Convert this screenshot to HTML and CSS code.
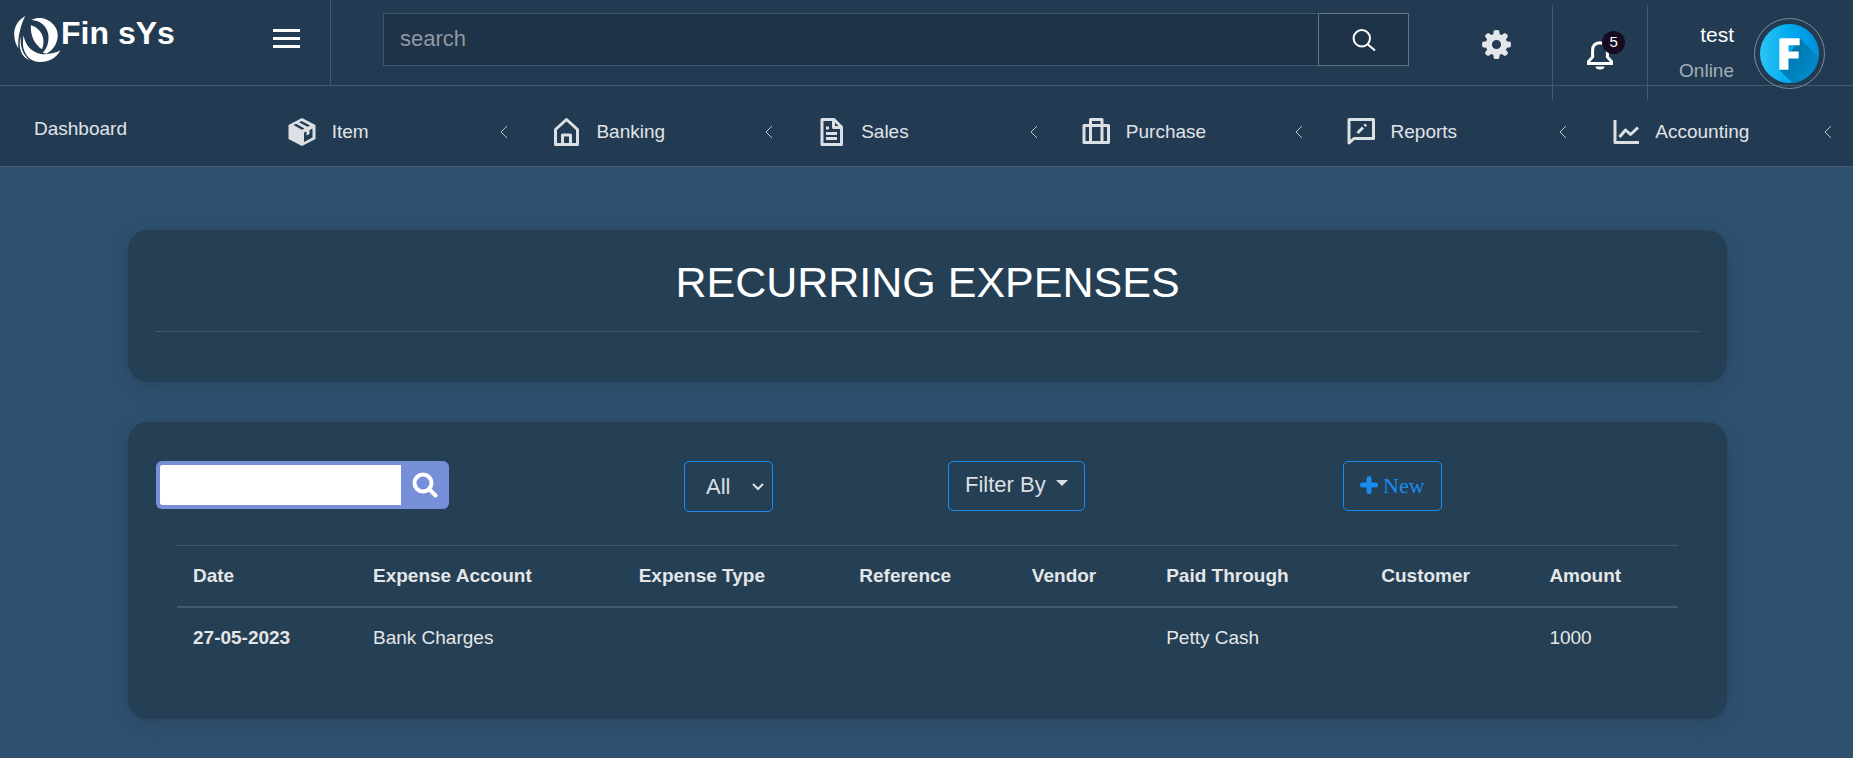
FILE: index.html
```html
<!DOCTYPE html>
<html lang="en">
<head>
<meta charset="utf-8">
<meta name="viewport" content="width=device-width, initial-scale=1">
<title>Fin sYs - Recurring Expenses</title>
<link rel="stylesheet" href="styles.css">
</head>
<body>
<header class="topbar">
  <div class="brand-area">
    <a class="brand" href="#">
      <svg class="brand-logo" viewBox="0 0 48 48" aria-hidden="true">
        <path d="M18 4C23 1.500 29 1.500 34 4C42 8 45.500 15 44.500 22C43.500 29 40 35 33 38.500L29.500 37.500C34 33 36 26 35 18.500C33.500 10 27 4.500 18 4Z"/>
        <path d="M17.300 9.500C23 11 29.500 17 30 24C30.300 28 30 31 28.500 34C21 29 16.500 20 17.300 9.500Z"/>
        <path d="M11.500 0C3 5 -1 13 .5 22C1 27 2.500 30 4.500 33C4 27 4.500 21 6 15.500C7 10 9 5 11.500 0Z"/>
        <path d="M9.800 20C11.500 30 18 37.500 28 38.800C35 39.500 42 38 47.500 35C43.500 42.500 36 47 26.500 47C17 47 10 39 9.200 30C9 26 9.200 23 9.800 20Z"/>
        <path d="M7 20C5.800 31 9 40 16 45C8 42.500 3.500 33 7 20Z"/>
      </svg>
      <span>Fin sYs</span>
    </a>
    <button class="menu-toggle" type="button" aria-label="Toggle menu"><span></span><span></span><span></span></button>
  </div>
  <form class="site-search">
    <input class="site-search-input" type="search" placeholder="search" aria-label="Search">
    <button class="site-search-button" type="button" aria-label="Search">
      <svg viewBox="0 0 24 24" aria-hidden="true"><circle cx="9.8" cy="10.3" r="8.2"/><path d="M15.600 16.200L23 22.500"/></svg>
    </button>
  </form>
  <div class="top-menu">
    <button class="settings" type="button" aria-label="Settings">
      <svg viewBox="0 0 24 24" aria-hidden="true"><path fill-rule="evenodd" d="M9.800 0.500Q12-.4 14.200.5L14.700 3.500 16.300 4.200 18.800 2.400Q21 3 21.600 5.200L19.800 7.700 20.500 9.300 23.500 9.800Q24.400 12 23.500 14.200L20.500 14.700 19.800 16.300 21.600 18.800Q21 21 18.800 21.600L16.300 19.800 14.700 20.500 14.200 23.500Q12 24.400 9.800 23.500L9.300 20.500 7.700 19.800 5.200 21.600Q3 21 2.400 18.800L4.200 16.300 3.500 14.700 .5 14.200Q-.4 12 .5 9.800L3.500 9.300 4.200 7.700 2.400 5.200Q3 3 5.200 2.400L7.700 4.200 9.300 3.500ZM12 8.200a3.800 3.800 0 1 0 0 7.600 3.800 3.800 0 0 0 0-7.600z"/></svg>
    </button>
    <button class="notifications" type="button" aria-label="5 notifications">
      <svg viewBox="0 0 28 30" aria-hidden="true"><path d="M14 2.800C9 3 6.600 6 6.600 10.500V17L2.500 21.500V23.500H25.500V21.500L21.400 17V10.500C21.400 6 19 3 14 2.800Z" class="bell-line"/><path d="M9.500 26.500h9a4.500 3 0 0 1-9 0z"/></svg>
      <span class="badge">5</span>
    </button>
    <a class="user" href="#">
      <span class="user-text"><span class="user-name">test</span><span class="user-status">Online</span></span>
      <span class="avatar">
        <svg viewBox="0 0 58 58" aria-hidden="true">
          <defs>
            <linearGradient id="disc"><stop offset="0" stop-color="#2cc4f6"/><stop offset=".5" stop-color="#00aaee"/><stop offset="1" stop-color="#0090dc"/></linearGradient>
            <linearGradient id="shade" x1="0" y1="0" x2="1" y2="1"><stop offset="0" stop-color="#006c9c"/><stop offset="1" stop-color="#0098e0"/></linearGradient>
            <clipPath id="round"><circle cx="29" cy="29" r="29"/></clipPath>
          </defs>
          <g clip-path="url(#round)">
            <rect width="58" height="58" fill="url(#disc)"/>
            <path d="M39 14L64 39V66H40L19 45Z" fill="url(#shade)"/>
            <path d="M20 14H39V21H28V27H38V34H28V45H19V15Z" fill="#fff"/>
          </g>
        </svg>
      </span>
    </a>
  </div>
</header>

<nav class="main-nav" aria-label="Main">
  <a class="nav-link nav-home" href="#">Dashboard</a>
  <a class="nav-link" href="#">
    <svg class="nav-icon" viewBox="0 0 32 32" aria-hidden="true"><path fill-rule="evenodd" d="M16 2L29.500 9V23L16 30L2.500 23V9ZM18 16.500V26L26.500 21.500V12.500L23.500 14V18L20.500 19.500V15.500ZM7.500 9L10 7.800L18.500 12.500L16 13.700ZM13 6.300L15.500 5L24 9.500L21.500 10.800Z"/></svg>
    <span>Item</span><svg class="chevron" viewBox="0 0 8 14" aria-hidden="true"><path d="M7 1L1 7L7 13"/></svg>
  </a>
  <a class="nav-link" href="#">
    <svg class="nav-icon lined" viewBox="0 0 32 32" aria-hidden="true"><path d="M16.500 3.500L27.500 13.500V28.500H5.500V13.500Z"/><path d="M12.500 28V19H20.500V28"/></svg>
    <span>Banking</span><svg class="chevron" viewBox="0 0 8 14" aria-hidden="true"><path d="M7 1L1 7L7 13"/></svg>
  </a>
  <a class="nav-link" href="#">
    <svg class="nav-icon lined" viewBox="0 0 32 32" aria-hidden="true"><path d="M7 3.500H19L26.500 11V28.500H7Z"/><path d="M18.500 4V11.500H26M11 17.500H22M11 22.500H22M11 12H14"/></svg>
    <span>Sales</span><svg class="chevron" viewBox="0 0 8 14" aria-hidden="true"><path d="M7 1L1 7L7 13"/></svg>
  </a>
  <a class="nav-link" href="#">
    <svg class="nav-icon lined" viewBox="0 0 32 32" aria-hidden="true"><path d="M4 9.500H28.500V26.500H4ZM10.500 26V3.500H22V26"/></svg>
    <span>Purchase</span><svg class="chevron" viewBox="0 0 8 14" aria-hidden="true"><path d="M7 1L1 7L7 13"/></svg>
  </a>
  <a class="nav-link" href="#">
    <svg class="nav-icon lined" viewBox="0 0 32 32" aria-hidden="true"><path d="M4 3.500H28.500V22.500H9L4 27Z"/><path d="M12.500 17L18 11.500M19.500 10L21 8.500"/></svg>
    <span>Reports</span><svg class="chevron" viewBox="0 0 8 14" aria-hidden="true"><path d="M7 1L1 7L7 13"/></svg>
  </a>
  <a class="nav-link" href="#">
    <svg class="nav-icon lined" viewBox="0 0 32 32" aria-hidden="true"><path d="M6 4V26.500H30M10.500 21L16.500 14L21.500 18.500L29 11.500"/></svg>
    <span>Accounting</span><svg class="chevron" viewBox="0 0 8 14" aria-hidden="true"><path d="M7 1L1 7L7 13"/></svg>
  </a>
</nav>

<main class="content">
  <section class="card title-card">
    <h1>RECURRING EXPENSES</h1>
    <hr>
  </section>

  <section class="card list-card">
    <div class="toolbar">
      <form class="table-search">
        <input type="text" aria-label="Search expenses">
        <button type="button" aria-label="Search expenses">
          <svg viewBox="0 0 26 26" aria-hidden="true"><circle cx="11" cy="11" r="8.500"/><path d="M17.500 17.500L23.500 23.500"/></svg>
        </button>
      </form>
      <div class="select-wrap">
        <select aria-label="Status"><option>All</option></select>
        <svg viewBox="0 0 12 8" aria-hidden="true"><path d="M1 1L6 6L11 1"/></svg>
      </div>
      <button class="outline-button" type="button">Filter By <span class="caret"></span></button>
      <a class="outline-button new-button" href="#"><svg viewBox="0 0 18 18" aria-hidden="true"><path d="M9 2.500V15.500M2.500 9H15.500"/></svg><span>New</span></a>
    </div>
    <div class="table-wrap">
      <table>
        <thead>
          <tr><th scope="col">Date</th><th scope="col">Expense Account</th><th scope="col">Expense Type</th><th scope="col">Reference</th><th scope="col">Vendor</th><th scope="col">Paid Through</th><th scope="col">Customer</th><th scope="col">Amount</th></tr>
        </thead>
        <tbody>
          <tr><th scope="row">27-05-2023</th><td>Bank Charges</td><td></td><td></td><td></td><td>Petty Cash</td><td></td><td>1000</td></tr>
        </tbody>
      </table>
    </div>
  </section>
</main>
</body>
</html>
```
FILE: styles.css
```css
:root {
  --bar: #223b52;
  --page: #2f5170;
  --card: #253f54;
  --line: #435a6f;
  --text: #e0e3e7;
  --blue: #1a8cf0;
}

* { box-sizing: border-box; }

body {
  margin: 0;
  min-height: 100vh;
  background: var(--page);
  color: var(--text);
  font-family: "Liberation Sans", Arial, sans-serif;
  font-size: 19px;
  line-height: 28px;
}

a { color: inherit; text-decoration: none; }
button { border: 0; padding: 0; background: none; color: inherit; font: inherit; cursor: pointer; }
svg { display: block; flex: none; }

/* Top bar */
.topbar {
  display: flex;
  align-items: flex-start;
  height: 86px;
  background: var(--bar);
  border-bottom: 1px solid var(--line);
}
.brand-area {
  display: flex;
  align-items: flex-start;
  justify-content: space-between;
  width: 331px;
  height: 86px;
  padding: 16px 30px 0 14px;
  border-right: 1px solid var(--line);
}
.brand { display: flex; color: #fff; font-size: 32px; font-weight: 700; line-height: 34px; }
.brand-logo { width: 47px; height: 47px; fill: #fff; }
.menu-toggle { display: grid; gap: 5px; margin-top: 13px; }
.menu-toggle span { width: 27px; height: 3px; background: #fff; }

.site-search { display: flex; flex: 1; height: 53px; margin: 13px 0 0 52px; }
.site-search-input {
  flex: 1;
  min-width: 0;
  padding: 0 16px 2px;
  background: #1e3347;
  border: 1px solid #40566a;
  border-right: 0;
  border-radius: 0;
  color: #fff;
  font: inherit;
  font-size: 22px;
  appearance: none;
}
.site-search-input::placeholder { color: #8f99a3; }
.site-search-button {
  display: grid;
  place-items: center;
  width: 91px;
  background: #1e3347;
  border: 1px solid #647585;
}
.site-search-button svg { width: 24px; height: 24px; fill: none; stroke: #fff; stroke-width: 2; }

.top-menu { display: flex; height: 95px; margin-top: 5px; }
.settings { display: grid; place-items: center; width: 108px; margin: 0 2px 16px 33px; }
.settings svg { width: 29px; height: 29px; fill: #e4e7ea; }
.notifications {
  position: relative;
  display: grid;
  place-items: center;
  width: 96px;
  padding-top: 4px;
  border: solid var(--line);
  border-width: 0 1px;
}
.notifications svg { width: 28px; height: 30px; fill: #fff; }
.notifications .bell-line { fill: none; stroke: #fff; stroke-width: 3; }
.badge {
  position: absolute;
  top: 26px;
  left: 49px;
  width: 23px;
  height: 23px;
  border-radius: 50%;
  background: #150c22;
  color: #fff;
  font-size: 15px;
  line-height: 22px;
  text-align: center;
}
.user { display: flex; align-items: flex-start; gap: 20px; padding: 13px 28px 0 31px; }
.user-text { display: grid; gap: 8px; padding-top: 3px; text-align: right; }
.user-name { color: #fff; font-size: 21px; line-height: 28px; }
.user-status { color: #a3aeb9; line-height: 28px; }
.avatar { padding: 5px; border: 1px solid #7d8b99; border-radius: 50%; }
.avatar svg { width: 59px; height: 59px; }

/* Navigation */
.main-nav {
  display: grid;
  grid-template-columns: repeat(7, 1fr);
  background: var(--bar);
  border-bottom: 1px solid var(--line);
}
.nav-link { display: flex; align-items: center; padding: 30px 21px 18px; height: 80px; }
.nav-home { padding: 24px 34px 18px; }
.nav-icon { width: 32px; height: 32px; margin-right: 14px; fill: #dcdfe4; }
.nav-icon.lined { fill: none; stroke: #dcdfe4; stroke-width: 3; stroke-linejoin: round; }
.chevron { width: 8px; height: 14px; margin-left: auto; fill: none; stroke: #c0c7ce; stroke-width: 1; }

/* Content */
.content { display: grid; gap: 40px; padding: 63px 126px 38px 128px; }
.card {
  padding: 28px;
  background: var(--card);
  border-radius: 20px;
  box-shadow: 0 4px 20px rgba(34, 50, 70, 0.35);
}
.title-card { padding-bottom: 50px; }
h1 { margin: 0; color: #fff; font-size: 43px; font-weight: 400; line-height: 48px; text-align: center; }
hr { height: 1px; margin: 25px 0 0; border: 0; background: var(--line); }

.list-card { padding: 39px 28px 51px; }
.toolbar { display: grid; grid-template-columns: 528fr 264fr 395fr 356fr; align-items: start; justify-items: start; height: 84px; }
.table-search { display: flex; width: 293px; height: 48px; }
.table-search input {
  flex: 1;
  min-width: 0;
  padding: 0 12px;
  border: 4px solid #768fd8;
  border-right: 0;
  border-radius: 6px 0 0 6px;
  background: #fff;
  font: inherit;
}
.table-search button { display: grid; place-items: center; width: 48px; border-radius: 0 6px 6px 0; background: #768fd8; }
.table-search svg { width: 26px; height: 26px; fill: none; stroke: #fff; stroke-width: 4; stroke-linecap: round; }

.select-wrap { display: grid; align-items: center; width: 89px; }
.select-wrap select,
.select-wrap svg { grid-area: 1 / 1; }
.select-wrap select {
  width: 100%;
  height: 51px;
  padding: 0 30px 0 21px;
  border: 1px solid var(--blue);
  border-radius: 5px;
  background: transparent;
  color: #dcdfe4;
  font: inherit;
  font-size: 22px;
  appearance: none;
}
.select-wrap svg { justify-self: end; width: 12px; height: 8px; margin-right: 9px; fill: none; stroke: #dcdfe4; stroke-width: 2; pointer-events: none; }

.outline-button {
  display: flex;
  align-items: center;
  height: 50px;
  padding: 0 16px 2px;
  border: 1px solid var(--blue);
  border-radius: 5px;
  color: #dcdfe4;
  font-size: 22px;
}
.caret { margin: 0 0 4px 10px; border: solid transparent; border-width: 6px 6px 0; border-top-color: #dcdfe4; }
.new-button { gap: 5px; padding-bottom: 0; color: var(--blue); font-family: "Liberation Serif", "Times New Roman", serif; }
.new-button svg { width: 18px; height: 18px; margin-bottom: 2px; fill: none; stroke: var(--blue); stroke-width: 5; stroke-linecap: round; }

.table-wrap { padding: 0 21px; }
table { width: 100%; border-collapse: collapse; }
th, td { padding: 16px; text-align: left; color: #e4e6e8; }
thead th { border-top: 1px solid var(--line); border-bottom: 2px solid var(--line); }
```
